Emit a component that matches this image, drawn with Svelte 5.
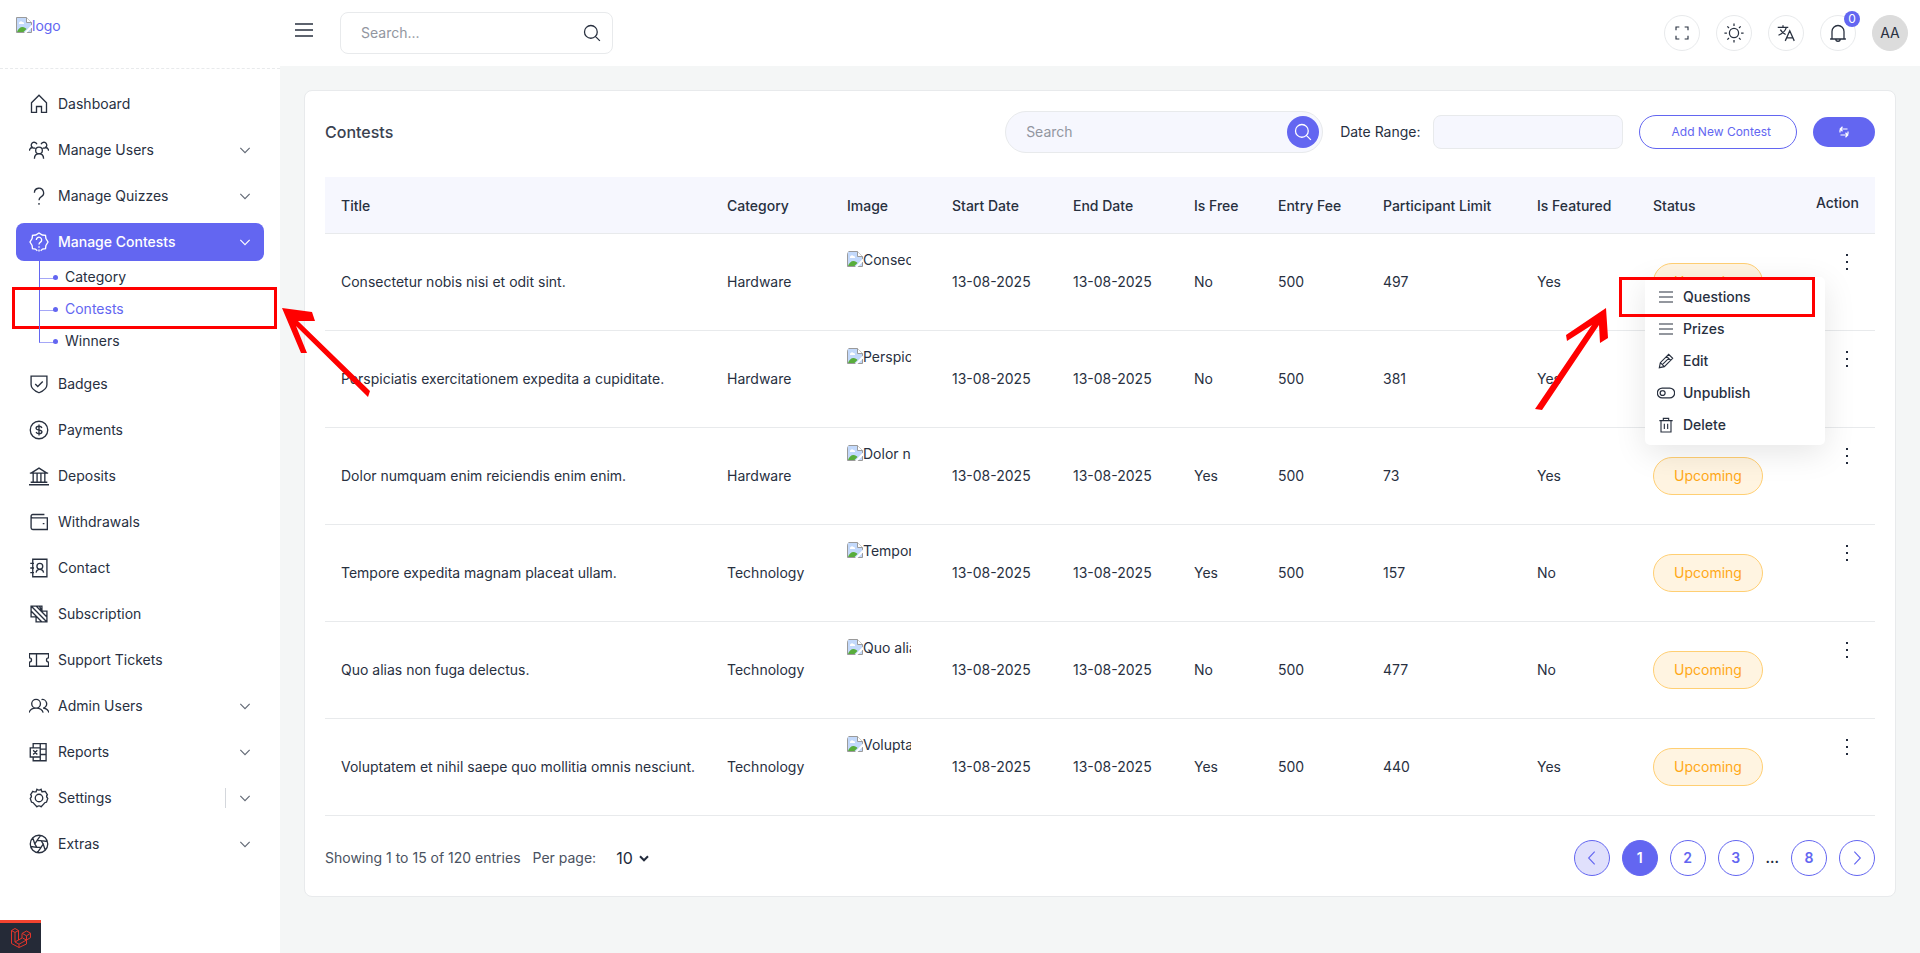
<script lang="ts">
	type NavItem = {
		label: string;
		icon: string;
		expandable?: boolean;
		divided?: boolean;
		children?: string[];
	};

	const nav: NavItem[] = [
		{ label: 'Dashboard', icon: 'home' },
		{ label: 'Manage Users', icon: 'users', expandable: true },
		{ label: 'Manage Quizzes', icon: 'question', expandable: true },
		{
			label: 'Manage Contests',
			icon: 'contest',
			expandable: true,
			children: ['Category', 'Contests', 'Winners']
		},
		{ label: 'Badges', icon: 'shield' },
		{ label: 'Payments', icon: 'dollar' },
		{ label: 'Deposits', icon: 'bank' },
		{ label: 'Withdrawals', icon: 'wallet' },
		{ label: 'Contact', icon: 'contact' },
		{ label: 'Subscription', icon: 'subscription' },
		{ label: 'Support Tickets', icon: 'ticket' },
		{ label: 'Admin Users', icon: 'admins', expandable: true },
		{ label: 'Reports', icon: 'reports', expandable: true },
		{ label: 'Settings', icon: 'gear', expandable: true, divided: true },
		{ label: 'Extras', icon: 'aperture', expandable: true }
	];

	const columns = [
		{ label: 'Title', width: 386 },
		{ label: 'Category', width: 120 },
		{ label: 'Image', width: 105 },
		{ label: 'Start Date', width: 121 },
		{ label: 'End Date', width: 121 },
		{ label: 'Is Free', width: 84 },
		{ label: 'Entry Fee', width: 105 },
		{ label: 'Participant Limit', width: 154 },
		{ label: 'Is Featured', width: 116 },
		{ label: 'Status', width: 143 },
		{ label: 'Action', width: 95 }
	];

	const contests = [
		{ title: 'Consectetur nobis nisi et odit sint.', category: 'Hardware', free: 'No', limit: 497, featured: 'Yes' },
		{ title: 'Perspiciatis exercitationem expedita a cupiditate.', category: 'Hardware', free: 'No', limit: 381, featured: 'Yes' },
		{ title: 'Dolor numquam enim reiciendis enim enim.', category: 'Hardware', free: 'Yes', limit: 73, featured: 'Yes' },
		{ title: 'Tempore expedita magnam placeat ullam.', category: 'Technology', free: 'Yes', limit: 157, featured: 'No' },
		{ title: 'Quo alias non fuga delectus.', category: 'Technology', free: 'No', limit: 477, featured: 'No' },
		{ title: 'Voluptatem et nihil saepe quo mollitia omnis nesciunt.', category: 'Technology', free: 'Yes', limit: 440, featured: 'Yes' }
	];

	const actions = [
		{ label: 'Questions', icon: 'lines' },
		{ label: 'Prizes', icon: 'lines' },
		{ label: 'Edit', icon: 'pencil' },
		{ label: 'Unpublish', icon: 'toggle' },
		{ label: 'Delete', icon: 'trash' }
	];

	// Stroke paths on a 24 x 24 grid
	const icons: Record<string, string> = {
		home: 'M3 10.500 12 1.500l9 9V22h-6v-7H9v7H3z',
		users:
			'M12 8.500a4 4 0 1 1 0 8 4 4 0 0 1 0-8M6.500 22.500c0-3.500 2-6 5.500-6s5.500 2.500 5.500 6M7.500 9.500A3.500 3.500 0 1 1 9.500 5M.5 13c0-2.500 2-4 4.500-4M16.500 9.500A3.500 3.500 0 1 0 14.500 5M23.500 13c0-2.500-2-4-4.500-4',
		question: 'M6.500 8a5.500 5.500 0 1 1 8 5c-1.800 1-2.500 2-2.500 4M12 20.500v2',
		contest:
			'M10 22.500 7.700 20.500 4.200 20 3.700 16.200 1.200 12 3.700 7.800 4.200 4 8 3.600 12 1.200 16 3.600 19.800 4 20.300 7.800 22.800 12 20.300 16.200 19.800 20 16.300 20.500 14 22.500M8.800 9.500a3.200 3.200 0 1 1 5 2.600c-1.200.8-1.800 1.400-1.800 2.900M12 17v2M12 21v2.500',
		shield: 'M2.500 2.500h19V13c0 4.500-4.500 7.500-9.500 9.500C7 20.500 2.500 17.500 2.500 13zM7.500 12l3 3 6-6',
		dollar:
			'M12 1.500a10.500 10.500 0 1 1 0 21 10.500 10.500 0 0 1 0-21M15.500 9.500C15 8 13.700 7.500 12 7.500c-2 0-3.500.8-3.500 2.300 0 3.200 7 1.200 7 4.400 0 1.500-1.500 2.300-3.500 2.300-1.700 0-3-.5-3.500-2M12 5.500v13',
		bank: 'M0 22.500h24M2 19.500h20M1 8.500h22M2.500 8.500 12 2.500l9.500 6M5 9v10.500M9.700 9v10.500M14.300 9v10.500M19 9v10.500',
		wallet: 'M18.500 3H4.500a2 2 0 0 0-2 2v14a2 2 0 0 0 2 2H22V7H4.500a2 2 0 0 1-2-2M16.500 14h2',
		contact:
			'M4.500 1.500h17v21h-17zM1.500 6.500H6M1.500 12H6M1.500 17.500H6M13 6.500a3 3 0 0 1 0 7 3 3 0 0 1 0-7M8.500 17.500c.5-2.500 2-4 4.500-4s4 1.500 4.500 4',
		subscription: 'M2.500 2.500h13v6h6v13h-13v-6h-6zM2.500 2.500l19 19M8.500 2.500l13 13M2.500 8.500l13 13M15.500 8.500l-3-6',
		ticket: 'M.5 4.500h23v5a2.500 2.500 0 0 0 0 5v5H.5v-5a2.500 2.500 0 0 0 0-5zM9 4.500v15',
		admins:
			'M8.500 4a5 5 0 0 1 0 10.500A5 5 0 0 1 8.500 4M0 20c1-3.500 4.500-5.500 8.500-5.500S16 16.500 17 20M15 4.300a5 5 0 1 1 2 10.200c3 .3 6 2 7 5.500',
		reports:
			'M5 7V2h15.500v20.500H5V18M1.500 7h12v11h-12zM5 10l5 5M10 10l-5 5M13.500 2v5M13.500 18v4.500M13.500 8.500h7M13.500 15h7',
		gear: 'M9.500 1.500Q12 3.500 14.500 1.500L15.500 4.500Q18.500 4 19.500 4L22 8Q20 10 22.500 12.500L21 17Q18.500 17 17.500 19.500L14.500 22.500Q12 20.500 9.500 22.500L6.500 19.500Q5.500 17 3 17L1.500 12.500Q4 10 2 8L4.500 4Q7 5 8.500 4.500zM12 7.500a4.500 4.500 0 1 1 0 9 4.500 4.500 0 0 1 0-9',
		aperture:
			'M12 1.500a10.500 10.500 0 1 1 0 21 10.500 10.500 0 0 1 0-21M9.500 8h5l2.500 4-2.500 4h-5L7 12zM9.500 8 14 1.700M14.500 8l7.500 1M17 12l2.500 7.500M14.500 16 10 22.300M9.500 16 2 15M7 12 4.500 4.500',
		menu: 'M0 4h24M0 12h24M0 20h24',
		lines: 'M1.500 4.500h21M1.500 12h21M1.500 19.500h21',
		search: 'M10.500 2a8.500 8.500 0 1 1 0 17 8.500 8.500 0 0 1 0-17M16.500 16.500l6 6',
		chevron: 'M4 8.500l8 8 8-8',
		left: 'M16 2.500 7 12l9 9.500',
		right: 'M8 2.500 17 12l-9 9.500',
		expand: 'M3 8V3h5M16 3h5v5M21 16v5h-5M8 21H3v-5',
		sun: 'M12 6.500a5.500 5.500 0 1 1 0 11 5.500 5.500 0 0 1 0-11M12 .5v3M12 20.500v3M.5 12h3M20.500 12h3M4 4l2 2M18 18l2 2M20 4l-2 2M6 18l-2 2',
		translate: 'M1 4.500h14M8 1.500v3M12.500 4.500C11 9.500 7 13 2 15M4.500 7.500c1.500 3 4 5 7 6.500M11 22.500 17 9l6 13.500M13 18.500h8',
		bell: 'M1.500 20h21M4 20V10a8 8 0 0 1 16 0v10M9 20a3 3 0 0 0 6 0',
		refresh: 'M4 13V9a3 3 0 0 1 3-3h12M9 1.500 4.500 6 9 10.500M20 11v4a3 3 0 0 1-3 3H5M15 13.500l4.500 4.500-4.500 4.500',
		pencil: 'M2 22l1.500-7.500L16 2l6 6L9.500 20.500zM3.500 14.500l6 6M13 5l6 6M6.500 17.500 16 8',
		toggle: 'M7 5.500h10a6.500 6.500 0 0 1 0 13H7a6.500 6.500 0 0 1 0-13M7.500 8.700a3.300 3.300 0 1 1 0 6.600 3.300 3.300 0 0 1 0-6.600',
		trash: 'M2 5.500h20M4.500 5.500v17h15v-17M8 5.500v-3.500h8v3.500M9.500 10v8M14.500 10v8'
	};

	let search = $state('');
	let filter = $state('');
	let dateRange = $state('');
	let perPage = $state('10');
</script>

{#snippet icon(name: string, kind = '')}
	<svg class="icon {kind}" viewBox="0 0 24 24" aria-hidden="true"><path d={icons[name]} /></svg>
{/snippet}

{#snippet missing(alt: string)}
	<svg class="missing" viewBox="0 0 16 16" aria-hidden="true">
		<path d="M.5.5h10l5 5v10H.5z" fill="#c3d9fb" stroke="#9a9a9a" />
		<path d="M10.500.5v5h5" fill="#fff" stroke="#9a9a9a" />
		<path d="M3 6.500a2 2 0 0 1 3.500-1.500A1.500 1.500 0 0 1 8 7H3z" fill="#fff" />
		<path d="M1 15c1-3 3-5 5.500-5 2 0 3 1 4 2l-3 3z" fill="#58ad3b" />
		<path d="M16 7.500 8 16h2.500L16 10.500z" fill="#fff" />
	</svg>{alt}
{/snippet}

<div class="layout">
	<aside class="sidebar">
		<div class="brand">
			<a href="#home" class="logo">{@render missing('logo')}</a>
		</div>
		<nav aria-label="Main">
			<ul class="nav">
				{#each nav as item (item.label)}
					<li>
						<a href="#{item.icon}" class="nav-link" class:active={item.children}>
							{@render icon(item.icon, 'nav-icon')}
							<span class="nav-label">{item.label}</span>
							{#if item.expandable}
								<span class="caret" class:divided={item.divided}>{@render icon('chevron', 'small')}</span>
							{/if}
						</a>
						{#if item.children}
							<ul class="subnav">
								{#each item.children as child}
									<li>
										<a href="#{child}" class:current={child === 'Contests'}>{child}</a>
										{#if child === 'Contests'}
											<span class="mark nav-mark"></span>
											<svg class="arrow nav-arrow" viewBox="282 308 90 90" aria-hidden="true">
												<path d="M282 308 312 312 315 321 298 321 370 391 368 397 296 326 307 353 301 353z" />
											</svg>
										{/if}
									</li>
								{/each}
							</ul>
						{/if}
					</li>
				{/each}
			</ul>
		</nav>
	</aside>

	<div class="main">
		<header class="topbar">
			<button class="burger" aria-label="Toggle menu">{@render icon('menu', 'medium')}</button>
			<div class="site-search">
				<input type="text" placeholder="Search..." aria-label="Search site" bind:value={search} />
				<button aria-label="Submit search">{@render icon('search', 'medium')}</button>
			</div>
			<div class="tools">
				<button class="tool" aria-label="Fullscreen">{@render icon('expand', 'tool-icon')}</button>
				<button class="tool" aria-label="Theme">{@render icon('sun')}</button>
				<button class="tool" aria-label="Language">{@render icon('translate', 'medium')}</button>
				<button class="tool" aria-label="Notifications">
					{@render icon('bell', 'medium')}
					<span class="count">0</span>
				</button>
				<button class="tool avatar">AA</button>
			</div>
		</header>

		<main class="content">
			<section class="card">
				<div class="card-head">
					<h1>Contests</h1>
					<div class="table-search">
						<input type="text" placeholder="Search" aria-label="Search contests" bind:value={filter} />
						<button aria-label="Search">{@render icon('search', 'medium')}</button>
					</div>
					<label for="date-range">Date Range:</label>
					<input id="date-range" class="date-range" type="text" bind:value={dateRange} />
					<button class="add">Add New Contest</button>
					<button class="refresh" aria-label="Refresh">{@render icon('refresh', 'tiny')}</button>
				</div>

				<table>
					<colgroup>
						{#each columns as column}
							<col style="width: {column.width}px" />
						{/each}
					</colgroup>
					<thead>
						<tr>
							{#each columns as column}
								<th scope="col">{column.label}</th>
							{/each}
						</tr>
					</thead>
					<tbody>
						{#each contests as contest, i}
							<tr>
								<td>{contest.title}</td>
								<td>{contest.category}</td>
								<td><div class="thumb">{@render missing(contest.title)}</div></td>
								<td>13-08-2025</td>
								<td>13-08-2025</td>
								<td>{contest.free}</td>
								<td>500</td>
								<td>{contest.limit}</td>
								<td>{contest.featured}</td>
								<td><span class="status">Upcoming</span></td>
								<td class="action">
									<button class="dots" aria-label="Actions">
										<svg viewBox="0 0 4 18" aria-hidden="true">
											<path d="M1 1h2v2H1zM1 8h2v2H1zM1 15h2v2H1z" />
										</svg>
									</button>
									{#if i === 0}
										<div class="dropdown">
											{#each actions as action}
												<button class="dropdown-item">
													{@render icon(action.icon, action.icon === 'toggle' ? 'medium' : 'menu-icon')}
													{action.label}
												</button>
											{/each}
											<span class="mark menu-mark"></span>
											<svg class="arrow menu-arrow" viewBox="1535 308 74 102" aria-hidden="true">
												<path d="M1606 308 1608 338 1600 343 1599 325 1542 410 1535 409 1592 325 1567 341 1566 335z" />
											</svg>
										</div>
									{/if}
								</td>
							</tr>
						{/each}
					</tbody>
				</table>

				<div class="card-foot">
					<span>Showing 1 to 15 of 120 entries</span>
					<label for="per-page">Per page:</label>
					<div class="select">
						<select id="per-page" bind:value={perPage}>
							<option>10</option>
							<option>25</option>
							<option>50</option>
						</select>
						{@render icon('chevron', 'select-icon')}
					</div>
					<div class="pages">
						<button class="page" disabled aria-label="Previous">{@render icon('left', 'page-icon')}</button>
						<button class="page selected">1</button>
						<button class="page">2</button>
						<button class="page">3</button>
						<span class="gap">...</span>
						<button class="page">8</button>
						<button class="page" aria-label="Next">{@render icon('right', 'page-icon')}</button>
					</div>
				</div>
			</section>
		</main>
	</div>

	<button class="debug" aria-label="Debug bar">
		<svg viewBox="0 0 20 20" aria-hidden="true">
			<path
				d="M.5 2.500 4 .5l3.500 2v9.500l3.500-2V5.500l4.500-2.500 4 2.200v4.500l-4 2.300v4L8 19.500l-7.500-4zM.5 2.500 4 4.500l3.500-2M4 4.500v9.500l4 2.200v3.300M11.500 5.500l4 2.300 4-2.500M15.500 7.800V12l-4-2M4 14l3.500-2M8 16.200l7.500-4.200"
			/>
		</svg>
	</button>
</div>

<style>
	:global(body) {
		background: #f4f6f6;
		color: #28303f;
		font-family: Inter, 'Liberation Sans', sans-serif;
		font-size: 14px;
		line-height: 20px;
	}

	* {
		box-sizing: border-box;
	}

	button,
	input,
	select {
		margin: 0;
		padding: 0;
		border: 0;
		background: none;
		color: inherit;
		font: inherit;
	}

	button {
		display: flex;
		align-items: center;
		justify-content: center;
		cursor: pointer;
	}

	input::placeholder {
		color: #9296a0;
		opacity: 1;
	}

	a {
		color: inherit;
		text-decoration: none;
	}

	ul {
		margin: 0;
		padding: 0;
		list-style: none;
	}

	/* Icons */
	.icon {
		width: 20px;
		height: 20px;
		flex-shrink: 0;
		fill: none;
		stroke: currentColor;
		stroke-width: 1.5;
	}

	.nav-icon {
		margin: 0 1px;
		stroke-width: 1.6;
	}

	.medium {
		width: 18px;
		height: 18px;
		stroke-width: 1.7;
	}

	.tool-icon,
	.menu-icon {
		width: 16px;
		height: 16px;
		stroke-width: 1.7;
	}

	.menu-icon {
		margin: 0 1px;
	}

	.page-icon {
		width: 16px;
		height: 16px;
		stroke-width: 1.7;
	}

	.small {
		width: 14px;
		height: 14px;
		stroke-width: 2;
	}

	.tiny {
		width: 12px;
		height: 12px;
		stroke-width: 2.4;
	}

	.missing {
		width: 16px;
		height: 16px;
		vertical-align: -2px;
	}

	/* Sidebar */
	.layout {
		display: flex;
		min-height: 100vh;
	}

	.sidebar {
		width: 280px;
		flex-shrink: 0;
		background: #fff;
	}

	.brand {
		height: 69px;
		padding: 16px;
		border-bottom: 1px dashed #e8eaec;
	}

	.logo {
		display: block;
		color: #6366f1;
	}

	.nav {
		display: flex;
		flex-direction: column;
		gap: 8px;
		padding: 16px;
	}

	.nav-link {
		display: flex;
		align-items: center;
		gap: 8px;
		height: 38px;
		padding: 0 12px;
		border-radius: 8px;
	}

	.nav-link.active {
		background: #6366f1;
		color: #fff;
		font-weight: 500;
	}

	.nav-label {
		flex: 1;
	}

	.caret {
		display: flex;
		align-items: center;
		height: 20px;
		color: #626975;
	}

	.active .caret {
		color: #fff;
	}

	.caret.divided {
		padding-left: 12px;
		border-left: 1px solid #d4d7dc;
	}

	.subnav li {
		position: relative;
		height: 32px;
		padding: 6px 0 6px 49px;
	}

	/* Tree line, branch and dot of each child entry */
	.subnav li::before {
		content: '';
		position: absolute;
		top: 0;
		left: 23px;
		width: 16px;
		height: 17px;
		border-left: 1px solid #6366f1;
		border-bottom: 1px solid #a5a7f7;
	}

	.subnav li + li::before {
		top: -16px;
		height: 33px;
	}

	.subnav a::before {
		content: '';
		position: absolute;
		top: 14px;
		left: 37px;
		width: 5px;
		height: 5px;
		border-radius: 50%;
		background: #6366f1;
	}

	.subnav .current {
		color: #6366f1;
	}

	/* Red markers */
	.mark {
		position: absolute;
		border: 3px solid #f00;
		pointer-events: none;
	}

	.arrow {
		position: absolute;
		fill: #f00;
		pointer-events: none;
		z-index: 2;
	}

	.nav-mark {
		top: -6px;
		left: -4px;
		width: 265px;
		height: 42px;
	}

	.nav-arrow {
		top: 15px;
		left: 266px;
		width: 90px;
		height: 90px;
	}

	.menu-mark {
		top: 0;
		left: -26px;
		width: 196px;
		height: 40px;
	}

	.menu-arrow {
		top: 31px;
		left: -110px;
		width: 74px;
		height: 102px;
	}

	/* Top bar */
	.main {
		flex: 1;
		min-width: 0;
	}

	.topbar {
		display: flex;
		align-items: center;
		height: 66px;
		padding: 0 12px;
		background: #fff;
	}

	.burger {
		width: 24px;
		height: 24px;
		margin: 0 24px 6px 0;
	}

	.site-search {
		display: flex;
		align-items: center;
		width: 273px;
		height: 42px;
		padding: 0 10px 0 20px;
		border: 1px solid #e8eaec;
		border-radius: 8px;
	}

	.site-search input {
		flex: 1;
		min-width: 0;
		outline: 0;
	}

	.site-search button {
		width: 20px;
		height: 20px;
	}

	.tools {
		display: flex;
		gap: 16px;
		margin-left: auto;
	}

	.tool {
		position: relative;
		width: 36px;
		height: 36px;
		border: 1px solid #e8eaec;
		border-radius: 50%;
	}

	.count {
		position: absolute;
		top: -5px;
		right: -5px;
		width: 16px;
		border-radius: 50%;
		background: #6366f1;
		color: #fff;
		font-size: 12px;
		line-height: 16px;
	}

	.avatar {
		border-color: #dcdcdc;
		background: #dcdcdc;
	}

	/* Card */
	.content {
		padding: 24px;
	}

	.card {
		padding: 20px;
		border: 1px solid #e8eaec;
		border-radius: 8px;
		background: #fff;
	}

	.card-head {
		display: flex;
		align-items: center;
		margin-bottom: 24px;
	}

	h1 {
		margin: 0 auto 0 0;
		font-size: 16px;
		font-weight: 500;
		color: #3a4250;
	}

	.table-search {
		display: flex;
		align-items: center;
		width: 318px;
		height: 42px;
		margin-right: 17px;
		padding: 0 3px 0 20px;
		border: 1px solid #e8eaec;
		border-radius: 21px;
		background: #f6f7fe;
	}

	.table-search input {
		flex: 1;
		min-width: 0;
		outline: 0;
	}

	.table-search button {
		width: 32px;
		height: 32px;
		border-radius: 50%;
		background: #6366f1;
		color: #fff;
	}

	.date-range {
		width: 190px;
		height: 34px;
		margin: 0 16px 0 12px;
		padding: 0 12px;
		border: 1px solid #e8eaec;
		border-radius: 8px;
		background: #f6f7fe;
	}

	.add {
		height: 34px;
		margin-right: 16px;
		padding: 0 25px 0 32px;
		border: 1px solid #6366f1;
		border-radius: 17px;
		color: #6366f1;
		font-size: 12px;
	}

	.refresh {
		width: 62px;
		height: 30px;
		border-radius: 15px;
		background: #6366f1;
		color: #fff;
	}

	table {
		width: 100%;
		table-layout: fixed;
		border-collapse: separate;
		border-spacing: 0;
	}

	th,
	td {
		padding: 16px;
		border-bottom: 1px solid #e8eaec;
		text-align: left;
		white-space: nowrap;
	}

	th {
		height: 57px;
		padding-top: 18px;
		background: #f6f7fe;
		font-weight: 500;
	}

	th:last-child {
		padding-top: 16px;
		text-align: right;
		vertical-align: top;
	}

	.thumb {
		width: 64px;
		height: 64px;
		border-radius: 5px;
		overflow: hidden;
	}

	.status {
		display: inline-block;
		padding: 8px 20px;
		border: 1px solid #ffcf73;
		border-radius: 19px;
		background: #fff4e1;
		color: #ffa817;
		vertical-align: middle;
	}

	.action {
		position: relative;
		vertical-align: top;
	}

	.dots {
		width: 24px;
		height: 24px;
		margin-left: auto;
	}

	.dots svg {
		width: 4px;
		height: 18px;
		fill: #222b3c;
	}

	.dropdown {
		position: absolute;
		top: 43px;
		right: 50px;
		z-index: 1;
		width: 180px;
		padding: 4px 0;
		border-radius: 5px;
		background: #fff;
		box-shadow: 0 8px 32px rgba(0, 0, 0, 0.1);
	}

	.dropdown-item {
		justify-content: flex-start;
		gap: 8px;
		width: 100%;
		height: 32px;
		padding: 0 12px;
		font-weight: 500;
	}

	/* Footer */
	.card-foot {
		display: flex;
		align-items: center;
		gap: 12px;
		margin-top: 24px;
		color: #4a5261;
	}

	.select {
		display: flex;
		position: relative;
		margin-left: 8px;
		color: #222b3c;
	}

	.select select {
		appearance: none;
		width: 34px;
		font-size: 16px;
	}

	.select-icon {
		position: absolute;
		top: 4px;
		right: 0;
		width: 12px;
		height: 12px;
		stroke-width: 4;
		pointer-events: none;
	}

	.pages {
		display: flex;
		align-items: center;
		gap: 12px;
		margin-left: auto;
	}

	.page {
		width: 36px;
		height: 36px;
		border: 1px solid #6366f1;
		border-radius: 50%;
		color: #6366f1;
		font-weight: 600;
	}

	.page:disabled {
		background: #e0e0fc;
	}

	.page.selected {
		background: #6366f1;
		color: #fff;
	}

	.gap {
		color: #222b3c;
		font-weight: 600;
	}

	.debug {
		position: fixed;
		bottom: 0;
		left: 0;
		width: 41px;
		height: 33px;
		border-top: 3px solid #f4432f;
		background: #252a37;
	}

	.debug svg {
		width: 20px;
		height: 20px;
		fill: none;
		stroke: #e2352b;
	}
</style>
